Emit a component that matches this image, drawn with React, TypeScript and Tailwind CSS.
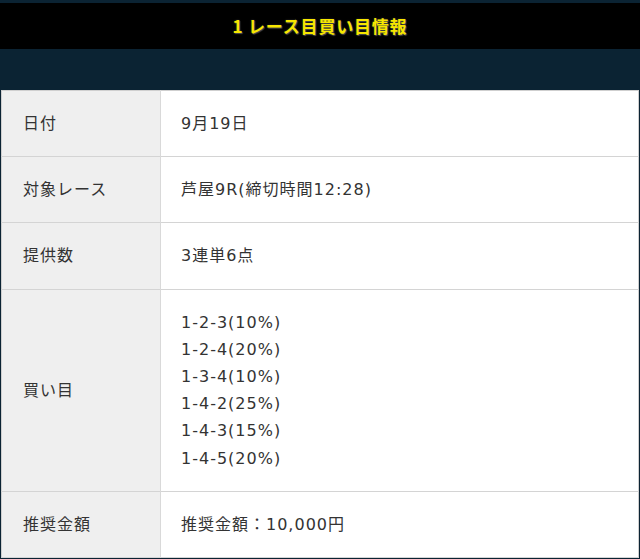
import React from "react";

const rows: { label: string; values: string[] }[] = [
  { label: "日付", values: ["9月19日"] },
  { label: "対象レース", values: ["芦屋9R(締切時間12:28)"] },
  { label: "提供数", values: ["3連単6点"] },
  {
    label: "買い目",
    values: ["1-2-3(10%)", "1-2-4(20%)", "1-3-4(10%)", "1-4-2(25%)", "1-4-3(15%)", "1-4-5(20%)"],
  },
  { label: "推奨金額", values: ["推奨金額：10,000円"] },
];

const App = () => {
  return (
    <div
      className="w-[640px] h-[559px] bg-[#0b2333] pt-[3px] overflow-hidden"
      style={{ fontFamily: '"Noto Sans CJK JP", "Noto Sans", sans-serif' }}
    >
      <header className="h-[46px] bg-black flex items-center justify-center">
        <h1 className="text-[17px] font-bold text-[#f7e600] tracking-[0.8px] [text-shadow:0_0_2px_#333,1px_1px_1px_#555]">
          1 レース目買い目情報
        </h1>
      </header>
      <div className="h-[41px]" />
      <table
        className="w-[638px] mx-[1px] border-collapse border border-[#cfcfcf] text-[16px] text-[#333] tracking-[1px]"
        style={{ fontFamily: '"DejaVu Sans", "Noto Sans CJK JP", sans-serif' }}
      >
        <tbody>
          {rows.map((r) => (
            <tr key={r.label} className="border-b border-[#d4d4d4]">
              <th className="w-[159px] bg-[#efefef] border-r border-[#d9d9d9] text-left font-normal pl-[21px] py-[19px] leading-[27.2px]">
                {r.label}
              </th>
              <td className="bg-white pl-[20px] py-[19px] leading-[27.2px]">
                {r.values.map((v) => (
                  <div key={v}>{v}</div>
                ))}
              </td>
            </tr>
          ))}
        </tbody>
      </table>
    </div>
  );
};

export default App;
